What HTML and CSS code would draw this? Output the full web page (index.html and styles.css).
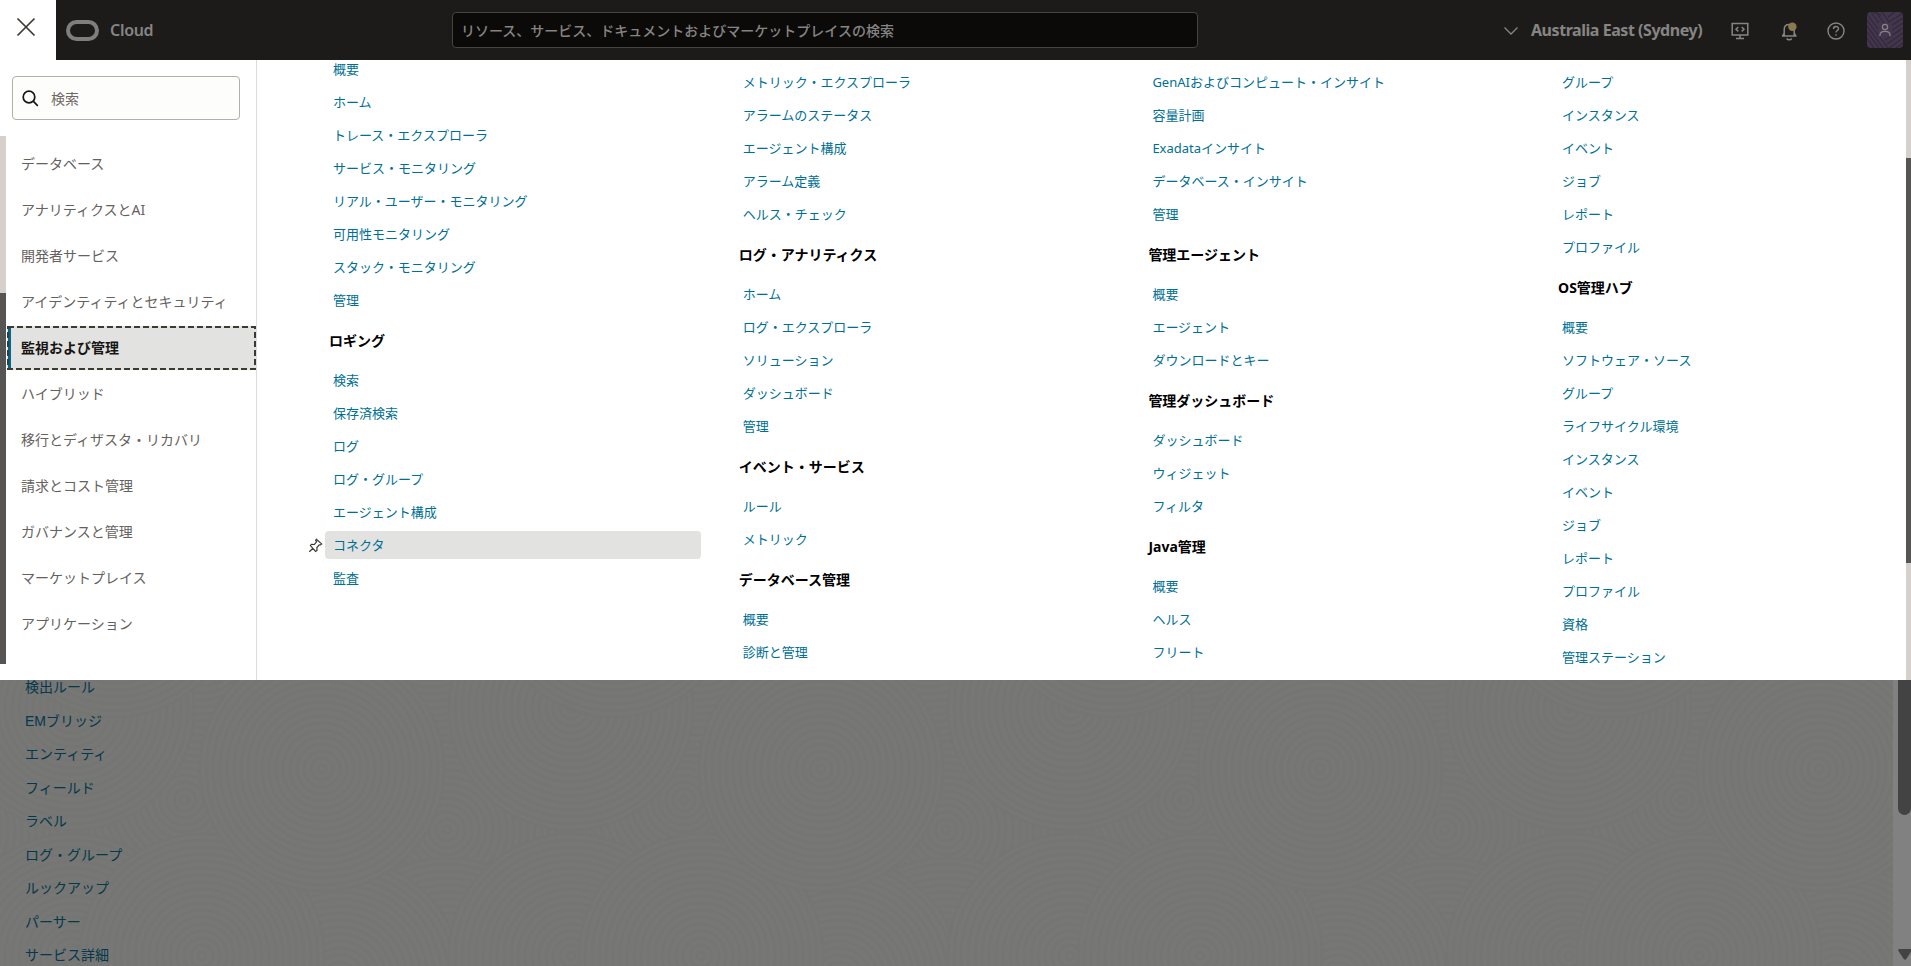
FILE: index.html
```html
<!DOCTYPE html>
<html lang="ja">
<head>
<meta charset="utf-8">
<title>Cloud</title>
<link rel="stylesheet" href="styles.css">
</head>
<body>
<header class="topbar">
  <button class="close" aria-label="close"><svg width="20" height="20" viewBox="0 0 20 20" fill="none" stroke="#3c3832" stroke-width="1.7"><path d="M1.500 1.500l17 17M18.500 1.500l-17 17"/></svg></button>
  <svg class="logo" width="33" height="21" viewBox="0 0 33 21" fill="none" stroke="#7e7e7d" stroke-width="4"><rect x="2" y="2" width="29" height="17" rx="8.500"/></svg>
  <span class="brand">Cloud</span>
  <div class="global-search">リソース、サービス、ドキュメントおよびマーケットプレイスの検索</div>
  <div class="tools">
    <svg class="chev" width="16" height="10" viewBox="0 0 16 10" fill="none" stroke="#858584" stroke-width="1.300"><path d="M1.500 1.500L8 8l6.500-6.500"/></svg>
    <span class="region">Australia East (Sydney)</span>
    <svg class="dev" width="18" height="18" viewBox="0 0 18 18" fill="none" stroke="#858584" stroke-width="1.500"><path d="M1.200 1.500h15.600v11.500H1.200zM9 13v3.500M5 16.500h8M7.300 5L5 7.200l2.300 2.200M10.700 5L13 7.200l-2.300 2.200"/></svg>
    <svg class="bell" width="17" height="19" viewBox="0 0 17 19" fill="none" stroke="#858584" stroke-width="1.500"><path d="M1 14h14.500M3.200 14V7.500c0-3 2-5 5-5s5 2 5 5V14M1.500 14l1.700-2.500M15 14l-1.700-2.500M5.700 16.500c1 1.600 4 1.600 5 0"/><circle cx="11.400" cy="4.800" r="4.200" fill="#8a7951" stroke="none"/></svg>
    <svg class="help" width="18" height="18" viewBox="0 0 18 18" fill="none" stroke="#858584" stroke-width="1.400"><circle cx="9" cy="9" r="8"/><path d="M6.500 7c0-3.400 5-3.200 5-.3 0 1.800-2.500 1.800-2.500 3.800M9 12.200v1.500"/></svg>
    <div class="avatar"><svg width="36" height="36" viewBox="0 0 36 36" fill="none"><g stroke="#32283a" stroke-width="1.100"><path d="M0 14l16 22M0 20l12 16M0 26l7 10M0 8l21 28M0 2l14 19M4 0l12 17M9 0l10 14M15 0l7 10M36 6L14 20M36 11L16 24M36 16L18 28M36 21L20 32M36 26L22 36M36 31l-7 5M36 1L22 10M28 0l-7 5M14 3L6 0"/></g><path d="M11 11h14v14H11z" fill="#43364c"/><g stroke="#89828d" stroke-width="1.200"><circle cx="18" cy="15" r="2.600"/><path d="M13 24v-.7c0-5.100 10-5.100 10 0v.7"/></g></svg></div>
  </div>
</header>
<main class="panel">
  <aside class="side">
    <div class="side-search"><svg width="17" height="17" viewBox="0 0 17 17" fill="none" stroke="#161513" stroke-width="1.700"><circle cx="7" cy="7" r="5.800"/><path d="M11.200 11.200l4.600 4.600"/></svg><span>検索</span></div>
    <div class="side-body">
      <div class="side-scroll"><i></i></div>
      <nav class="side-nav">
        <a>データベース</a><a>アナリティクスとAI</a><a>開発者サービス</a><a>アイデンティティとセキュリティ</a><a class="active">監視および管理<svg width="249" height="44" viewBox="0 0 249 44" fill="none"><path d="M2.500 2v40" stroke="#00688c" stroke-width="3"/><rect x="1" y="1" width="247" height="42" stroke="#3c3832" stroke-width="2" stroke-dasharray="6 3"/></svg></a><a>ハイブリッド</a><a>移行とディザスタ・リカバリ</a><a>請求とコスト管理</a><a>ガバナンスと管理</a><a>マーケットプレイス</a><a>アプリケーション</a>
      </nav>
    </div>
  </aside>
  <section class="columns">
    <div class="col first">
      <a>概要</a><a>ホーム</a><a>トレース・エクスプローラ</a><a>サービス・モニタリング</a><a>リアル・ユーザー・モニタリング</a><a>可用性モニタリング</a><a>スタック・モニタリング</a><a>管理</a>
      <h3>ロギング</h3>
      <a>検索</a><a>保存済検索</a><a>ログ</a><a>ログ・グループ</a><a>エージェント構成</a><a class="hover"><svg class="pin" width="15" height="15" viewBox="0 0 15 15" fill="none" stroke="#3c3832" stroke-width="1.200"><path d="M8.300 1.200l5.400 4.700-1.300 1.100-1.200-.1-2.300 2.600.1 3-1.400 1L2.400 7.600l1-1.200 3 .1 2.200-2.700-.9-1.300zM5 10.200L1.300 13.700"/></svg>コネクタ</a><a>監査</a>
    </div>
    <div class="col">
      <a>メトリック・エクスプローラ</a><a>アラームのステータス</a><a>エージェント構成</a><a>アラーム定義</a><a>ヘルス・チェック</a>
      <h3>ログ・アナリティクス</h3>
      <a>ホーム</a><a>ログ・エクスプローラ</a><a>ソリューション</a><a>ダッシュボード</a><a>管理</a>
      <h3>イベント・サービス</h3>
      <a>ルール</a><a>メトリック</a>
      <h3>データベース管理</h3>
      <a>概要</a><a>診断と管理</a>
    </div>
    <div class="col">
      <a>GenAIおよびコンピュート・インサイト</a><a>容量計画</a><a>Exadataインサイト</a><a>データベース・インサイト</a><a>管理</a>
      <h3>管理エージェント</h3>
      <a>概要</a><a>エージェント</a><a>ダウンロードとキー</a>
      <h3>管理ダッシュボード</h3>
      <a>ダッシュボード</a><a>ウィジェット</a><a>フィルタ</a>
      <h3>Java管理</h3>
      <a>概要</a><a>ヘルス</a><a>フリート</a>
    </div>
    <div class="col">
      <a>グループ</a><a>インスタンス</a><a>イベント</a><a>ジョブ</a><a>レポート</a><a>プロファイル</a>
      <h3>OS管理ハブ</h3>
      <a>概要</a><a>ソフトウェア・ソース</a><a>グループ</a><a>ライフサイクル環境</a><a>インスタンス</a><a>イベント</a><a>ジョブ</a><a>レポート</a><a>プロファイル</a><a>資格</a><a>管理ステーション</a>
    </div>
  </section>
  <div class="panel-scroll"><i></i></div>
</main>
<div class="page">
  <div class="under">
    <svg class="texture" width="1893" height="286">
      <defs>
        <g id="disc"><circle r="123" fill="#777775" stroke="none"/><circle r="4"/><circle r="11"/><circle r="18"/><circle r="25"/><circle r="32"/><circle r="39"/><circle r="46"/><circle r="53"/><circle r="60"/><circle r="67"/><circle r="74"/><circle r="81"/><circle r="88"/><circle r="95"/><circle r="102"/><circle r="109"/><circle r="116"/><circle r="122"/></g>
        <g id="back"><use href="#disc" x="185" y="120"/><use href="#disc" x="447" y="150"/><use href="#disc" x="447" y="300"/><use href="#disc" x="340" y="300"/><use href="#disc" x="200" y="-40"/><use href="#disc" x="430" y="-60"/></g>
        <g id="mid"><use href="#disc" x="72" y="276"/><use href="#disc" x="202" y="276"/></g>
        <g id="front"><use href="#disc" x="322" y="89"/><use href="#disc" x="72" y="28"/><use href="#disc" x="115" y="-85"/></g>
      </defs>
      <g fill="none" stroke="#757573" stroke-width="2.500">
        <use href="#back" x="-499"/><use href="#back"/><use href="#back" x="499"/><use href="#back" x="998"/><use href="#back" x="1497"/>
        <use href="#mid" x="-499"/><use href="#mid"/><use href="#mid" x="499"/><use href="#mid" x="998"/><use href="#mid" x="1497"/>
        <use href="#front" x="-499"/><use href="#front"/><use href="#front" x="499"/><use href="#front" x="998"/><use href="#front" x="1497"/>
      </g>
    </svg>
    <nav class="under-nav"><a>検出ルール</a><a>EMブリッジ</a><a>エンティティ</a><a>フィールド</a><a>ラベル</a><a>ログ・グループ</a><a>ルックアップ</a><a>パーサー</a><a>サービス詳細</a></nav>
  </div>
  <div class="page-scroll"><i></i><svg width="14" height="12" viewBox="0 0 14 12"><path d="M1 0h12q1.300.5.500 2L8.300 10q-1.300 1.500-2.600 0L.5 2Q-.3.500 1 0z" fill="#434343"/></svg></div>
</div>
</body>
</html>
```

FILE: styles.css
```css
* { box-sizing: border-box; }
body {
  margin: 0;
  width: 1911px;
  height: 966px;
  overflow: hidden;
  background: #777775;
  font-family: "Noto Sans", "Noto Sans CJK JP", sans-serif;
  display: flex;
  flex-direction: column;
}
svg { display: block; flex: none; }
.topbar { height: 60px; flex: none; background: #1d1b19; display: flex; align-items: center; }
.close { width: 56px; height: 60px; border: 0; background: #fff; padding: 17px 0 0 16px; align-self: stretch; display: flex; align-items: flex-start; }
.logo { margin-left: 10px; }
.brand { margin-left: 11px; width: 342px; font-size: 16px; line-height: 24px; font-weight: 600; letter-spacing: -.3px; color: #858584; }
.global-search { width: 746px; height: 36px; border: 1px solid #454442; border-radius: 4px; background: #0b0a09; color: #858483; font-size: 14px; font-weight: 500; line-height: 35px; padding-left: 8px; white-space: nowrap; }
.tools { flex: 1; display: flex; align-items: center; }
.chev { margin-left: 305px; margin-top: 2px; }
.region { margin-left: 12px; width: 173px; font-size: 16px; font-weight: 700; letter-spacing: -.45px; line-height: 24px; white-space: nowrap; color: #858584; }
.dev { margin: 2px 0 0 27px; }
.bell { margin: 2px 0 0 32px; }
.help { margin: 2px 0 0 29px; }
.avatar { margin-left: 22px; width: 36px; height: 36px; border-radius: 4px; background: #43364c; overflow: hidden; }

.panel { height: 620px; flex: none; background: #fff; display: flex; overflow: hidden; }
.side { width: 257px; flex: none; border-right: 1px solid #dcdcdb; padding-top: 16px; }
.side-search { margin-left: 12px; width: 228px; height: 44px; border: 1px solid #b3b0a5; border-radius: 4px; background: #fdfdfb; display: flex; align-items: center; gap: 12px; padding-left: 9px; font-size: 14px; color: #6f6964; }
.side-body { display: flex; margin-top: 16px; }
.side-scroll { width: 6px; height: 528px; background: #d5d0cc; flex: none; padding-top: 157px; }
.side-scroll i { display: block; height: 371px; background: #565554; }
.side-nav { padding: 6px 0 0 1px; width: 250px; }
.side-nav a { display: block; height: 44px; margin-bottom: 2px; padding-left: 14px; font-size: 14px; line-height: 43px; color: #65625e; white-space: nowrap; }
.side-nav .active { position: relative; background: #e2e2e1; color: #161513; font-weight: 700; }
.active svg { position: absolute; left: 0; top: 0; }

.columns { flex: 1; display: grid; grid-template-columns: repeat(4, 409.700px); padding-left: 68px; overflow: hidden; }
.col { padding-top: 8px; }
.first { padding-top: 0; margin-top: -5px; }
.col a { display: block; width: 376px; height: 28px; margin-bottom: 5px; padding-left: 8px; font-size: 13px; line-height: 29px; color: #006f94; border-radius: 4px; white-space: nowrap; }
.col h3 { margin: 0 0 0 4px; height: 47px; font-size: 14px; line-height: 43px; font-weight: 700; color: #000; }
.col .hover { position: relative; background: #e2e2e1; }
.pin { position: absolute; left: -17px; top: 7px; }
.panel-scroll { width: 5px; flex: none; background: #d5d0cc; padding-top: 98px; }
.panel-scroll i { display: block; height: 405px; background: #565554; }

.page { height: 286px; display: flex; }
.under { width: 1893px; position: relative; overflow: hidden; }
.texture { position: absolute; left: 0; top: 0; }
.under-nav { position: relative; margin-top: -9px; padding-left: 25px; font-family: "Liberation Sans", "Noto Sans CJK JP", sans-serif; }
.under-nav a { display: block; height: 33.500px; font-size: 14px; line-height: 33.500px; color: #04384b; }
.page-scroll { width: 18px; background: #818181; padding-left: 5px; overflow: hidden; }
.page-scroll i { display: block; width: 13px; height: 135px; background: #434343; border-radius: 0 0 7px 7px; }
.page-scroll svg { margin-top: 134px; }
```
